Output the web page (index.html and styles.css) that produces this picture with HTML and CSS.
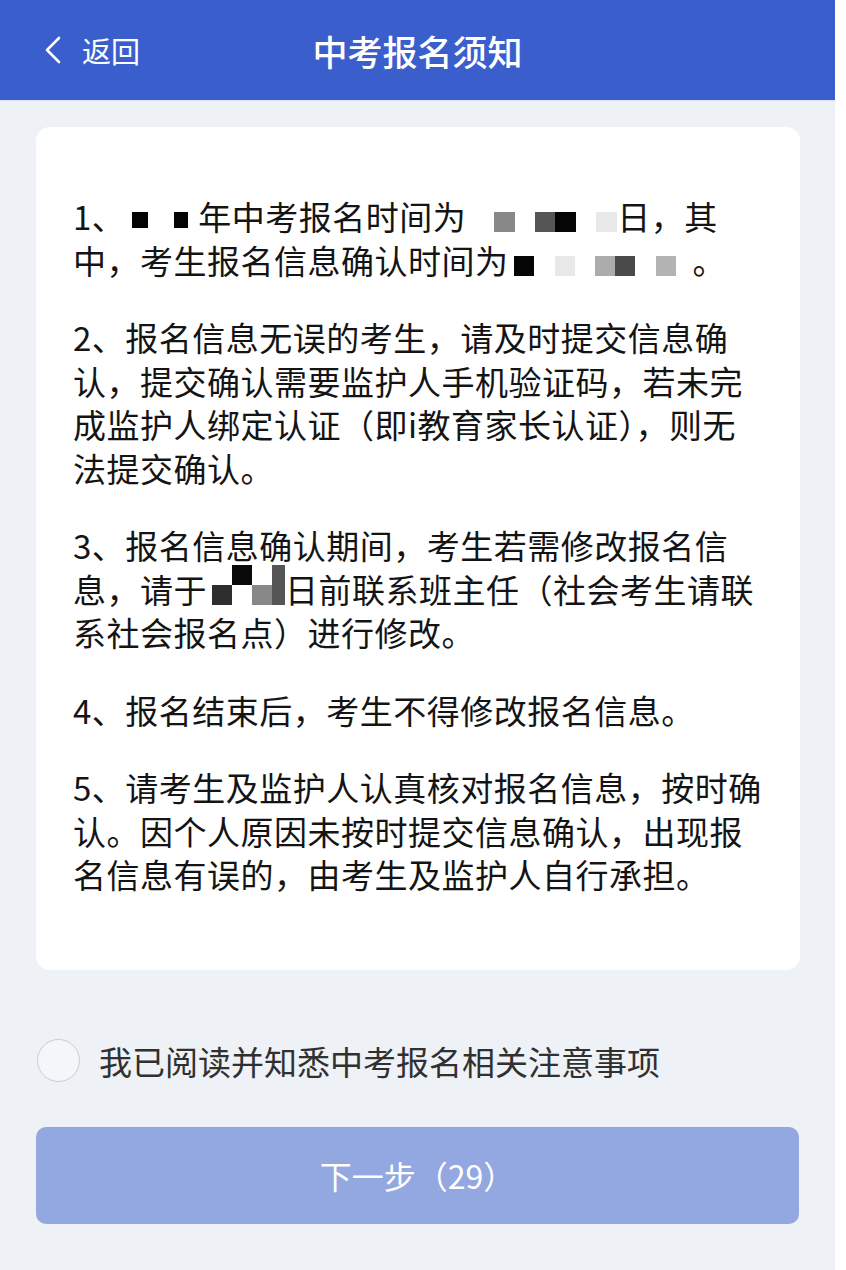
FILE: index.html
```html
<!DOCTYPE html>
<html lang="zh-CN">
<head>
<meta charset="utf-8">
<title>中考报名须知</title>
<link rel="stylesheet" href="styles.css">
</head>
<body>
<div class="app">
  <header class="topbar">
    <div class="back">
      <svg class="chev" width="18" height="30" viewBox="0 0 18 30"><path d="M15 3 L3 15 L15 27" fill="none" stroke="#fff" stroke-width="2.6" stroke-linecap="round" stroke-linejoin="round"/></svg>
      <span class="back-text">返回</span>
    </div>
    <h1 class="title">中考报名须知</h1>
  </header>

  <main class="card">
    <p class="para">1、<span class="mosaic m-year"><i class="t w7"></i><i class="c k w16 h16"></i><i class="t w26"></i><i class="c k w14 h16"></i><i class="t w10"></i></span>年中考报名时间为<span class="mosaic m-date1"><i class="t w28"></i><i class="c g8 w21"></i><i class="t w20"></i><i class="c g5 w20"></i><i class="c k w21"></i><i class="t w20"></i><i class="c g1 w21"></i></span>日，其中，考生报名信息确认时间为<span class="mosaic m-date2"><i class="t w5"></i><i class="c k w20"></i><i class="t w21"></i><i class="c g1 w20"></i><i class="t w20"></i><i class="c ga w20"></i><i class="c g4 w20"></i><i class="t w21"></i><i class="c gb w20"></i><i class="t w17"></i></span>。</p>
    <p class="para">2、报名信息无误的考生，请及时提交信息确认，提交确认需要监护人手机验证码，若未完成监护人绑定认证（即i教育家长认证），则无法提交确认。</p>
    <p class="para">3、报名信息确认期间，考生若需修改报名信息，请于<span class="mosaic m-date3"><i class="t w5"></i><i class="c g3 w20"></i><i class="c split w20"></i><i class="c g8 w20"></i><i class="c g5 w13 tall"></i></span>日前联系班主任（社会考生请联系社会报名点）进行修改。</p>
    <p class="para">4、报名结束后，考生不得修改报名信息。</p>
    <p class="para">5、请考生及监护人认真核对报名信息，按时确认。因个人原因未按时提交信息确认，出现报名信息有误的，由考生及监护人自行承担。</p>
  </main>

  <div class="agree">
    <span class="radio"></span>
    <span class="agree-text">我已阅读并知悉中考报名相关注意事项</span>
  </div>

  <div class="btn-wrap">
    <button class="next" type="button">下一步（29）</button>
  </div>
</div>
</body>
</html>
```

FILE: styles.css
```css
html, body {
  margin: 0;
  padding: 0;
  background: #ffffff;
}

body {
  font-family: "Noto Sans CJK SC", "Noto Sans", sans-serif;
}

.app {
  width: 835px;
  min-height: 1270px;
  background: #eef1f5;
  display: flex;
  flex-direction: column;
}

.topbar {
  height: 100px;
  background: #3b5ecd;
  display: flex;
  align-items: center;
  position: relative;
  box-shadow: 0 1px 0 #d9e1f1;
}

.back {
  display: flex;
  align-items: center;
  padding-left: 44px;
  gap: 20px;
  color: #fff;
}

.chev {
  display: block;
}

.back-text {
  font-size: 29px;
  line-height: 1;
}

.title {
  position: absolute;
  left: 0;
  right: 0;
  top: 0;
  height: 100px;
  margin: 0;
  display: flex;
  align-items: center;
  justify-content: center;
  color: #fff;
  font-size: 35px;
  font-weight: 500;
  pointer-events: none;
}

.card {
  margin: 27px 35px 0 36px;
  background: #ffffff;
  border-radius: 14px;
  padding: 68px 37px 73px 37px;
}

.para {
  margin: 0 0 34px 0;
  font-size: 33px;
  line-height: 43.5px;
  letter-spacing: 0.5px;
  color: #141414;
}

.para:last-child {
  margin-bottom: 0;
}

.mosaic {
  display: inline-flex;
  align-items: center;
  vertical-align: middle;
  height: 22px;
  position: relative;
  top: 1px;
  letter-spacing: 0;
}

.mosaic i {
  display: block;
  height: 20px;
  flex: none;
}

.mosaic .t { background: transparent; }
.mosaic .k { background: #050505; }
.mosaic .g1 { background: #e8e8e8; }
.mosaic .g3 { background: #2e2e2e; }
.mosaic .g4 { background: #4a4a4a; }
.mosaic .g5 { background: #555555; }
.mosaic .g8 { background: #888888; }
.mosaic .ga { background: #acacac; }
.mosaic .gb { background: #b3b3b3; }
.mosaic .h16 { height: 16px; }
.mosaic .split {
  height: 40px;
  background: linear-gradient(#0a0a0a 50%, #ffffff 50%);
  align-self: flex-start;
  margin-top: -19px;
}
.mosaic .tall {
  height: 40px;
  margin-top: -19px;
  align-self: flex-start;
}

.m-year { top: -1px; }

.w5 { width: 5px; }
.w7 { width: 7px; }
.w10 { width: 10px; }
.w13 { width: 13px; }
.w14 { width: 14px; }
.w16 { width: 16px; }
.w17 { width: 17px; }
.w20 { width: 20px; }
.w21 { width: 21px; }
.w26 { width: 26px; }
.w28 { width: 28px; }

.agree {
  display: flex;
  align-items: center;
  margin: 69px 0 0 37px;
  gap: 19px;
}

.radio {
  width: 41px;
  height: 41px;
  border: 1.5px solid #cccccc;
  border-radius: 50%;
  background: #f4f6f9;
  flex: none;
}

.agree-text {
  font-size: 33px;
  color: #303030;
  line-height: 44px;
}

.btn-wrap {
  margin: 44px 36px 0 36px;
}

.next {
  width: 100%;
  height: 97px;
  border: none;
  border-radius: 10px;
  background: #93a8e0;
  color: #ffffff;
  font-family: "Noto Sans CJK SC", "Noto Sans", sans-serif;
  font-size: 32px;
  display: flex;
  align-items: center;
  justify-content: center;
  padding: 0;
}
```
